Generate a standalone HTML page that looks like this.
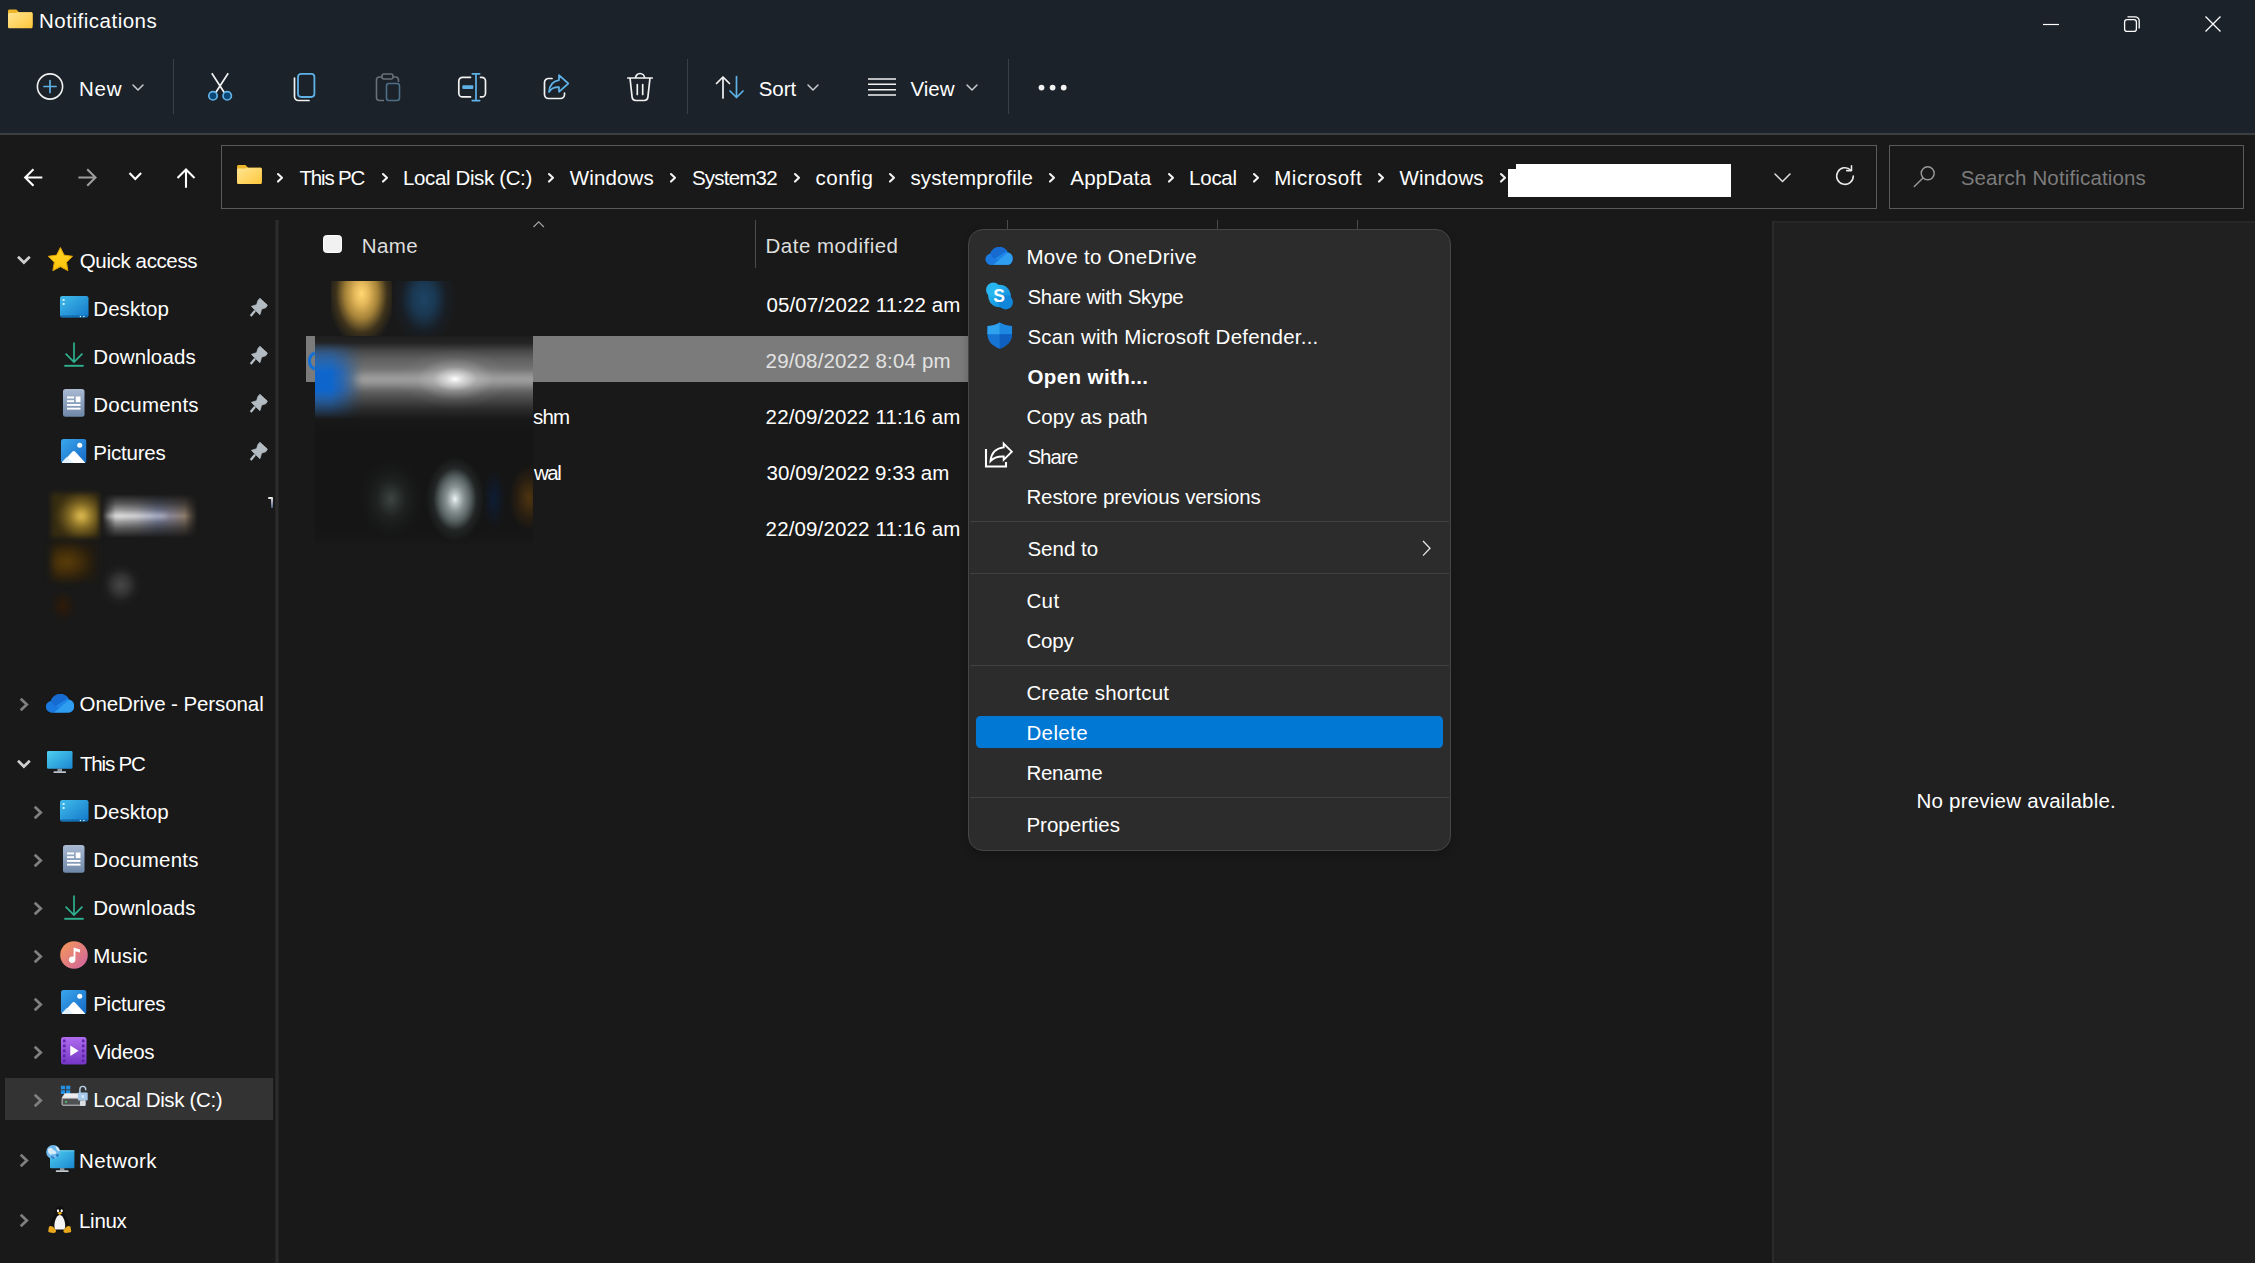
<!DOCTYPE html>
<html lang="en">
<head>
<meta charset="utf-8">
<title>Notifications</title>
<style>
*{box-sizing:border-box;margin:0;padding:0}
html,body{width:2255px;height:1263px;overflow:hidden;background:#191919}
body{position:relative;font-family:"Liberation Sans",sans-serif;font-size:20px;color:#fff}
.a{position:absolute}
.t{position:absolute;white-space:nowrap;line-height:30px;height:30px;font-size:20.5px;color:#fff}
svg{position:absolute;overflow:visible}
#top{left:0;top:0;width:2255px;height:133px;background:#1b2229}
#topline{left:0;top:133px;width:2255px;height:2px;background:#3c3f42}
#navrow{left:0;top:135px;width:2255px;height:85px;background:#191919}
#addr{left:221px;top:145px;width:1656px;height:64px;border:1px solid #5a5a5a;background:#191919}
#search{left:1889px;top:145px;width:355px;height:64px;border:1px solid #5a5a5a;background:#191919}
#side{left:0;top:220px;width:275px;height:1043px;background:#191919}
#sdiv{left:275px;top:220px;width:4px;height:1043px;background:linear-gradient(to right,#202020,#2b2b2b 30%,#2b2b2b 70%,#202020)}
#main{left:279px;top:220px;width:1493px;height:1043px;background:#191919}
#pdiv{left:1772px;top:220.500px;width:2.300px;height:1043px;background:#2b2b2b}
#prev{left:1774px;top:220.500px;width:481px;height:1043px;background:#202020;border-top:2.500px solid #272727}
.sep{position:absolute;width:1px;background:#39404a}
</style>
</head>
<body>
<!-- ===== title bar + toolbar ===== -->
<div id="top" class="a"></div>
<div id="topline" class="a"></div>
<div id="navrow" class="a"></div>
<div id="addr" class="a"></div>
<div id="search" class="a"></div>
<div id="side" class="a"></div>
<div id="sdiv" class="a"></div>
<div id="main" class="a"></div>
<div id="pdiv" class="a"></div>
<div id="prev" class="a"></div>

<svg style="left:8.4px;top:8.9px" width="24.6" height="19.7" viewBox="0 0 26 20"><defs><linearGradient id="fgt" x1="0" y1="0" x2="1" y2="1"><stop offset="0" stop-color="#ffe592"/><stop offset="1" stop-color="#ffc73c"/></linearGradient></defs>
<path d="M1.500 0h7.300l2.900 3H24.500c.8 0 1.500.7 1.500 1.500V17H0V1.500C0 .7.700 0 1.500 0z" fill="#ebb62a"/>
<path d="M0 5.200c0-.8.700-1.500 1.500-1.500h6.800l2.200-.7H24.500c.8 0 1.500.7 1.500 1.500V18.500c0 .8-.7 1.500-1.500 1.500H1.500C.7 20 0 19.300 0 18.500z" fill="url(#fgt)"/></svg>
<div class="t" style="left:39.0px;top:6.4px;letter-spacing:0.51px;">Notifications</div>
<svg style="left:2040px;top:14px" width="24" height="20" viewBox="0 0 24 20"><path d="M3 10.500h16" stroke="#fff" stroke-width="1.200" fill="none"/></svg>
<svg style="left:2120px;top:12px" width="24" height="24" viewBox="0 0 24 24"><rect x="4.600" y="7.600" width="11.800" height="11.800" rx="2.500" fill="none" stroke="#fff" stroke-width="1.300"/><path d="M7.500 4.800h7.500c2.300 0 4.200 1.900 4.200 4.200v7.500" fill="none" stroke="#fff" stroke-width="1.300"/></svg>
<svg style="left:2201px;top:12px" width="24" height="24" viewBox="0 0 24 24"><path d="M4.500 4.500l15 15M19.500 4.500l-15 15" stroke="#fff" stroke-width="1.300" fill="none"/></svg>

<svg style="left:35px;top:72px" width="30" height="30" viewBox="0 0 30 30"><circle cx="15" cy="14.500" r="12.600" fill="none" stroke="#f2f2f2" stroke-width="1.600"/><path d="M15 8.500v12M9 14.500h12" stroke="#5fb2e8" stroke-width="1.700" fill="none" stroke-linecap="round"/></svg>
<div class="t" style="left:79.0px;top:73.7px;letter-spacing:0.75px;">New</div>
<svg style="left:131.0px;top:82.8px" width="14" height="9" viewBox="0 0 14 9"><path d="M2 2l5.0 5l5.0 -5" fill="none" stroke="#c8ccd0" stroke-width="1.5" stroke-linecap="round" stroke-linejoin="round"/></svg>
<div class="sep" style="left:173px;top:59px;height:55px"></div>
<svg style="left:205px;top:71px" width="30" height="32" viewBox="0 0 30 32"><path d="M6.800 2.300l12.600 19.500M23.200 2.300l-12.600 19.500" stroke="#f2f2f2" stroke-width="1.700" fill="none" stroke-linecap="butt"/><circle cx="8" cy="24.800" r="4.200" fill="#0b4774" stroke="#5fb2e8" stroke-width="1.700"/><circle cx="22.200" cy="24.800" r="4.200" fill="#0b4774" stroke="#5fb2e8" stroke-width="1.700"/></svg>
<svg style="left:290px;top:71px" width="30" height="32" viewBox="0 0 30 32"><path d="M4.500 7v18.500c0 2.200 1.800 4 4 4H19" fill="none" stroke="#f2f2f2" stroke-width="1.700" stroke-linecap="round"/><rect x="8" y="2.800" width="16.400" height="23.200" rx="3.200" fill="none" stroke="#5fb2e8" stroke-width="1.800"/></svg>
<svg style="left:373px;top:71px" width="30" height="32" viewBox="0 0 30 32"><path d="M9 6H6.500C4.800 6 3.500 7.300 3.500 9v17.500c0 1.700 1.300 3 3 3H11M20 6h2.500c1.700 0 3 1.300 3 3v2" fill="none" stroke="#68717b" stroke-width="1.600"/><rect x="9" y="3" width="11" height="5" rx="2" fill="none" stroke="#68717b" stroke-width="1.600"/><rect x="13.500" y="12.500" width="13" height="17" rx="2.500" fill="none" stroke="#4d6f88" stroke-width="1.600"/></svg>
<svg style="left:456px;top:71px" width="32" height="32" viewBox="0 0 32 32"><path d="M14.500 6.300H6.500c-2 0-3.700 1.700-3.700 3.700v12.200c0 2 1.700 3.700 3.700 3.700h8M24.500 6.300h1.300c2 0 3.700 1.700 3.700 3.700v12.200c0 2-1.700 3.700-3.700 3.700h-1.300" fill="none" stroke="#f2f2f2" stroke-width="1.700" stroke-linecap="round"/><path d="M16.300 2.800h7.400M16.300 29.600h7.400M20 2.800v26.800" stroke="#5fb2e8" stroke-width="1.700" fill="none" stroke-linecap="round"/><rect x="6.300" y="14.300" width="11" height="3.600" rx="1" fill="#5fb2e8"/></svg>
<svg style="left:541px;top:72px" width="32" height="30" viewBox="0 0 32 30"><path d="M11 6.500H7.500c-2.200 0-4 1.800-4 4v12c0 2.200 1.800 4 4 4h12c2.200 0 4-1.800 4-4V21" fill="none" stroke="#f2f2f2" stroke-width="1.700" stroke-linecap="round"/><path d="M18 3.200l9.300 8.300-9.300 8.300v-4.600c-4.500-.2-7.800 1.300-10 4.800.4-6.200 3.800-10.800 10-11.800z" fill="none" stroke="#5fb2e8" stroke-width="1.700" stroke-linejoin="round"/></svg>
<svg style="left:624px;top:71px" width="32" height="32" viewBox="0 0 32 32"><path d="M3.800 7h24.400M11.500 7c0-2.500 2-4.500 4.500-4.500s4.500 2 4.500 4.500M6 7l2.100 19.200c.2 1.900 1.800 3.300 3.700 3.300h8.400c1.900 0 3.500-1.400 3.700-3.300L26 7M13.300 13.500v10M18.700 13.500v10" fill="none" stroke="#f2f2f2" stroke-width="1.700" stroke-linecap="round" stroke-linejoin="round"/></svg>
<div class="sep" style="left:687px;top:59px;height:55px"></div>
<svg style="left:714px;top:74px" width="32" height="26" viewBox="0 0 32 26"><path d="M9 24V3M2.500 9.500L9 3l6.500 6.500" fill="none" stroke="#f2f2f2" stroke-width="1.700" stroke-linecap="round" stroke-linejoin="round"/><path d="M22.500 2.500v21M16 17l6.500 6.500L29 17" fill="none" stroke="#5fb2e8" stroke-width="1.700" stroke-linecap="round" stroke-linejoin="round"/></svg>
<div class="t" style="left:758.7px;top:73.7px;letter-spacing:-0.03px;">Sort</div>
<svg style="left:806.2px;top:82.8px" width="14" height="9" viewBox="0 0 14 9"><path d="M2 2l5.0 5l5.0 -5" fill="none" stroke="#c8ccd0" stroke-width="1.5" stroke-linecap="round" stroke-linejoin="round"/></svg>
<svg style="left:866px;top:76px" width="32" height="22" viewBox="0 0 32 22"><path d="M2 3h28M2 8.300h28M2 13.700h28M2 19h28" stroke="#f2f2f2" stroke-width="1.500" fill="none"/></svg>
<div class="t" style="left:910.4px;top:73.7px;letter-spacing:0.01px;">View</div>
<svg style="left:965.2px;top:82.8px" width="14" height="9" viewBox="0 0 14 9"><path d="M2 2l5.0 5l5.0 -5" fill="none" stroke="#c8ccd0" stroke-width="1.5" stroke-linecap="round" stroke-linejoin="round"/></svg>
<div class="sep" style="left:1008px;top:59px;height:55px"></div>
<svg style="left:1036px;top:82px" width="34" height="12" viewBox="0 0 34 12"><circle cx="5.500" cy="5.600" r="2.900" fill="#f2f2f2"/><circle cx="16.600" cy="5.600" r="2.900" fill="#f2f2f2"/><circle cx="27.700" cy="5.600" r="2.900" fill="#f2f2f2"/></svg>

<svg style="left:20px;top:160px" width="180" height="36" viewBox="20 160 180 36"><path d="M42.300 177.500H25.500M33.500 169.200L25.200 177.500L33.500 185.800" stroke="#fff" fill="none" stroke-width="2.100" stroke-linecap="butt" stroke-linejoin="miter"/><path d="M78.400 177.500H95.200M87.200 169.200L95.500 177.500L87.200 185.800" stroke="#9d9d9d" fill="none" stroke-width="2.100" stroke-linecap="butt" stroke-linejoin="miter"/><path d="M129.500 173L135.300 179L141.100 173" stroke="#fff" fill="none" stroke-width="2.100" stroke-linecap="butt" stroke-linejoin="miter"/><path d="M186 187.700V169.800M177.500 178L186 169.500L194.500 178" stroke="#fff" fill="none" stroke-width="2.100" stroke-linecap="butt" stroke-linejoin="miter"/></svg>
<svg style="left:236.5px;top:165px" width="24.9" height="19.1" viewBox="0 0 26 20"><defs><linearGradient id="fgn" x1="0" y1="0" x2="1" y2="1"><stop offset="0" stop-color="#ffe592"/><stop offset="1" stop-color="#ffc73c"/></linearGradient></defs>
<path d="M1.500 0h7.300l2.900 3H24.500c.8 0 1.500.7 1.500 1.500V17H0V1.500C0 .7.700 0 1.500 0z" fill="#ebb62a"/>
<path d="M0 5.200c0-.8.700-1.500 1.500-1.500h6.800l2.200-.7H24.500c.8 0 1.500.7 1.500 1.500V18.500c0 .8-.7 1.500-1.500 1.500H1.500C.7 20 0 19.300 0 18.500z" fill="url(#fgn)"/></svg>
<div class="t" style="left:299.5px;top:162.6px;letter-spacing:-1.17px;">This PC</div>
<div class="t" style="left:403.0px;top:162.6px;letter-spacing:-0.37px;">Local Disk (C:)</div>
<div class="t" style="left:569.8px;top:162.6px;letter-spacing:0.13px;">Windows</div>
<div class="t" style="left:691.9px;top:162.6px;letter-spacing:-0.78px;">System32</div>
<div class="t" style="left:815.6px;top:162.6px;letter-spacing:0.50px;">config</div>
<div class="t" style="left:910.4px;top:162.6px;letter-spacing:0.15px;">systemprofile</div>
<div class="t" style="left:1070.3px;top:162.6px;letter-spacing:0.17px;">AppData</div>
<div class="t" style="left:1189.1px;top:162.6px;letter-spacing:-0.26px;">Local</div>
<div class="t" style="left:1274.2px;top:162.6px;letter-spacing:0.54px;">Microsoft</div>
<div class="t" style="left:1399.5px;top:162.6px;letter-spacing:0.16px;">Windows</div>
<svg style="left:275.8px;top:172.1px" width="8" height="11.6" viewBox="0 0 8 11.6"><path d="M2 2l4 3.8l-4 3.8" fill="none" stroke="#f4f4f4" stroke-width="2.1" stroke-linecap="round" stroke-linejoin="round"/></svg>
<svg style="left:380.5px;top:172.1px" width="8" height="11.6" viewBox="0 0 8 11.6"><path d="M2 2l4 3.8l-4 3.8" fill="none" stroke="#f4f4f4" stroke-width="2.1" stroke-linecap="round" stroke-linejoin="round"/></svg>
<svg style="left:546.5999999999999px;top:172.1px" width="8" height="11.6" viewBox="0 0 8 11.6"><path d="M2 2l4 3.8l-4 3.8" fill="none" stroke="#f4f4f4" stroke-width="2.1" stroke-linecap="round" stroke-linejoin="round"/></svg>
<svg style="left:668.5px;top:172.1px" width="8" height="11.6" viewBox="0 0 8 11.6"><path d="M2 2l4 3.8l-4 3.8" fill="none" stroke="#f4f4f4" stroke-width="2.1" stroke-linecap="round" stroke-linejoin="round"/></svg>
<svg style="left:792.5999999999999px;top:172.1px" width="8" height="11.6" viewBox="0 0 8 11.6"><path d="M2 2l4 3.8l-4 3.8" fill="none" stroke="#f4f4f4" stroke-width="2.1" stroke-linecap="round" stroke-linejoin="round"/></svg>
<svg style="left:888.0999999999999px;top:172.1px" width="8" height="11.6" viewBox="0 0 8 11.6"><path d="M2 2l4 3.8l-4 3.8" fill="none" stroke="#f4f4f4" stroke-width="2.1" stroke-linecap="round" stroke-linejoin="round"/></svg>
<svg style="left:1047.8999999999999px;top:172.1px" width="8" height="11.6" viewBox="0 0 8 11.6"><path d="M2 2l4 3.8l-4 3.8" fill="none" stroke="#f4f4f4" stroke-width="2.1" stroke-linecap="round" stroke-linejoin="round"/></svg>
<svg style="left:1166.6px;top:172.1px" width="8" height="11.6" viewBox="0 0 8 11.6"><path d="M2 2l4 3.8l-4 3.8" fill="none" stroke="#f4f4f4" stroke-width="2.1" stroke-linecap="round" stroke-linejoin="round"/></svg>
<svg style="left:1251.5px;top:172.1px" width="8" height="11.6" viewBox="0 0 8 11.6"><path d="M2 2l4 3.8l-4 3.8" fill="none" stroke="#f4f4f4" stroke-width="2.1" stroke-linecap="round" stroke-linejoin="round"/></svg>
<svg style="left:1376.8px;top:172.1px" width="8" height="11.6" viewBox="0 0 8 11.6"><path d="M2 2l4 3.8l-4 3.8" fill="none" stroke="#f4f4f4" stroke-width="2.1" stroke-linecap="round" stroke-linejoin="round"/></svg>
<svg style="left:1498.8px;top:172.1px" width="8" height="11.6" viewBox="0 0 8 11.6"><path d="M2 2l4 3.8l-4 3.8" fill="none" stroke="#f4f4f4" stroke-width="2.1" stroke-linecap="round" stroke-linejoin="round"/></svg>
<div class="a" style="left:1507.600px;top:163.600px;width:223.400px;height:33.200px;background:#fff"></div><div class="a" style="left:1507px;top:163px;width:8.500px;height:5.500px;background:#191919"></div>
<svg style="left:1772.5px;top:171.75px" width="19" height="11.5" viewBox="0 0 19 11.5"><path d="M2 2l7.5 7.5l7.5 -7.5" fill="none" stroke="#e0e0e0" stroke-width="1.5" stroke-linecap="round" stroke-linejoin="round"/></svg>
<svg style="left:1833px;top:164px" width="24" height="24" viewBox="0 0 24 24"><path d="M20.300 12a8.300 8.300 0 1 1-2.600-6" fill="none" stroke="#e8e8e8" stroke-width="1.600" stroke-linecap="round"/><path d="M18.500 1.800v4.800h-4.800" fill="none" stroke="#e8e8e8" stroke-width="1.600" stroke-linecap="round" stroke-linejoin="round"/></svg>
<svg style="left:1912px;top:164px" width="24" height="24" viewBox="0 0 24 24"><circle cx="15.700" cy="9.300" r="6.500" fill="none" stroke="#9a9a9a" stroke-width="1.400"/><path d="M11 14L2.300 22.500" stroke="#9a9a9a" stroke-width="1.400" stroke-linecap="round"/></svg>
<div class="t" style="left:1960.7px;top:163.4px;color:#7c7c7c;letter-spacing:0.15px;">Search Notifications</div>

<svg width="0" height="0" style="left:0;top:0"><defs>
<linearGradient id="gDesk" x1="0" y1="0" x2="1" y2="1"><stop offset="0" stop-color="#42bcec"/><stop offset="1" stop-color="#1278c8"/></linearGradient>
<linearGradient id="gDoc" x1="0" y1="0" x2="0" y2="1"><stop offset="0" stop-color="#a9bad2"/><stop offset="1" stop-color="#6f88a8"/></linearGradient>
<linearGradient id="gPic" x1="0" y1="0" x2="1" y2="1"><stop offset="0" stop-color="#3aa7ee"/><stop offset="1" stop-color="#1668c4"/></linearGradient>
<linearGradient id="gMus" x1="0" y1="0" x2="1" y2="1"><stop offset="0" stop-color="#f79a55"/><stop offset="1" stop-color="#cf62a3"/></linearGradient>
<linearGradient id="gVid" x1="0" y1="0" x2="0" y2="1"><stop offset="0" stop-color="#b06cf0"/><stop offset="1" stop-color="#7436c4"/></linearGradient>
<linearGradient id="gMon" x1="0" y1="0" x2="1" y2="1"><stop offset="0" stop-color="#4fd0f0"/><stop offset="1" stop-color="#1a86d0"/></linearGradient>
<linearGradient id="gCloud" x1="0" y1="0" x2="1" y2="1"><stop offset="0" stop-color="#1a73d8"/><stop offset="1" stop-color="#2aa5f0"/></linearGradient>
<linearGradient id="gStar" x1="0" y1="0" x2="0" y2="1"><stop offset="0" stop-color="#ffd626"/><stop offset="1" stop-color="#ffc20a"/></linearGradient>
</defs></svg>
<div class="a" style="left:5px;top:1078px;width:268px;height:42px;background:#333333"></div>
<svg style="left:15px;top:254.10000000000002px" width="18" height="13" viewBox="0 0 18 13"><path d="M3 2.800l5.900 5.700 5.900-5.700" fill="none" stroke="#cfcfcf" stroke-width="2.700"/></svg>
<svg style="left:47.6px;top:246.5px" width="25" height="26" viewBox="0 0 25 26"><path d="M12.40 0.50L16.16 8.12L24.57 9.34L18.49 15.28L19.92 23.66L12.40 19.70L4.88 23.66L6.31 15.28L0.23 9.34L8.64 8.12z" fill="url(#gStar)" stroke="#dca000" stroke-width="1" stroke-linejoin="round"/></svg>
<div class="t" style="left:79.8px;top:245.9px;letter-spacing:-0.38px;">Quick access</div>
<svg style="left:59.8px;top:296px" width="29" height="22" viewBox="0 0 29 22"><rect x="0" y="0" width="28.500" height="21.500" rx="2.200" fill="url(#gDesk)"/><path d="M0 19.200h28.500v.1c0 1.200-1 2.200-2.200 2.200H2.200C1 21.500 0 20.500 0 19.300z" fill="#0b5c9e" opacity=".6"/><rect x="2.600" y="3" width="2" height="2" fill="#c9f0ff"/><rect x="2.600" y="7" width="2" height="2" fill="#c9f0ff"/><rect x="19.800" y="19.900" width="1.300" height="1.200" fill="#d8f3ff"/><rect x="23.200" y="19.900" width="1.300" height="1.200" fill="#d8f3ff"/></svg>
<div class="t" style="left:93.3px;top:293.9px;letter-spacing:0.05px;">Desktop</div>
<svg style="left:245px;top:292px" width="30" height="30" viewBox="245 292 30 30"><path d="M259.900 298.300L267.400 305.100L265.800 307.700L261.600 309.100L259.900 314.700L251.400 306.400L256.600 304.700L258 300.500z" fill="#b2bac2" stroke="#b2bac2" stroke-width=".8" stroke-linejoin="round"/><path d="M255 310.700L250.700 316" stroke="#b8c0c8" stroke-width="2.300" stroke-linecap="butt"/></svg>
<svg style="left:64px;top:342px" width="20" height="25" viewBox="0 0 20 25"><path d="M10 0.500v19.500M1.600 11.600L10 20l8.400-8.400" fill="none" stroke="#2fb08f" stroke-width="1.700"/><path d="M0.300 23.800h19.400" stroke="#2fb08f" stroke-width="1.900"/></svg>
<div class="t" style="left:93.3px;top:341.9px;letter-spacing:0.12px;">Downloads</div>
<svg style="left:245px;top:340px" width="30" height="30" viewBox="245 292 30 30"><path d="M259.900 298.300L267.400 305.100L265.800 307.700L261.600 309.100L259.900 314.700L251.400 306.400L256.600 304.700L258 300.500z" fill="#b2bac2" stroke="#b2bac2" stroke-width=".8" stroke-linejoin="round"/><path d="M255 310.700L250.700 316" stroke="#b8c0c8" stroke-width="2.300" stroke-linecap="butt"/></svg>
<svg style="left:63px;top:389px" width="22" height="28" viewBox="0 0 22 28"><rect x="0" y="0" width="21.500" height="27.800" rx="2.500" fill="url(#gDoc)"/><rect x="4" y="7.500" width="7" height="1.900" fill="#fff"/><rect x="4" y="11.200" width="7" height="1.900" fill="#fff"/><rect x="12.800" y="7.500" width="4.700" height="5.600" fill="#fff"/><rect x="4" y="15" width="13.500" height="1.900" fill="#fff"/><rect x="4" y="18.700" width="13.500" height="1.900" fill="#fff"/></svg>
<div class="t" style="left:93.3px;top:389.9px;letter-spacing:0.20px;">Documents</div>
<svg style="left:245px;top:388px" width="30" height="30" viewBox="245 292 30 30"><path d="M259.900 298.300L267.400 305.100L265.800 307.700L261.600 309.100L259.900 314.700L251.400 306.400L256.600 304.700L258 300.500z" fill="#b2bac2" stroke="#b2bac2" stroke-width=".8" stroke-linejoin="round"/><path d="M255 310.700L250.700 316" stroke="#b8c0c8" stroke-width="2.300" stroke-linecap="butt"/></svg>
<svg style="left:61px;top:438.7px" width="26" height="24" viewBox="0 0 26 24"><clipPath id="pc438"><rect x="0" y="0" width="25.500" height="24" rx="2.800"/></clipPath><g clip-path="url(#pc438)"><rect width="25.500" height="24" fill="url(#gPic)"/><path d="M1 24L11.500 12.500c.7-.7 1.800-.7 2.500 0L24.500 24z" fill="#fff"/><path d="M0 24l6-6.200 6.500 6.200z" fill="#e2f2ff"/></g><circle cx="18.700" cy="6.200" r="2.500" fill="#fff"/></svg>
<div class="t" style="left:93.3px;top:437.9px;letter-spacing:-0.24px;">Pictures</div>
<svg style="left:245px;top:436px" width="30" height="30" viewBox="245 292 30 30"><path d="M259.900 298.300L267.400 305.100L265.800 307.700L261.600 309.100L259.900 314.700L251.400 306.400L256.600 304.700L258 300.500z" fill="#b2bac2" stroke="#b2bac2" stroke-width=".8" stroke-linejoin="round"/><path d="M255 310.700L250.700 316" stroke="#b8c0c8" stroke-width="2.300" stroke-linecap="butt"/></svg>
<svg style="left:17.5px;top:696.0px" width="13" height="17" viewBox="0 0 13 17"><path d="M2.700 2.700l6.100 5.800-6.100 5.800" fill="none" stroke="#808080" stroke-width="2.700" stroke-linecap="butt" stroke-linejoin="miter"/></svg>
<svg style="left:45.6px;top:693.6px" width="28" height="18.5" viewBox="0 0 28 18.5"><path d="M6.200 18.500C2.800 18.500 0 15.900 0 12.700c0-2.800 2.100-5.100 4.900-5.700C6.100 2.900 9.900 0 14.300 0c3.900 0 7.300 2.300 8.800 5.700 2.800.4 4.900 2.800 4.900 5.700v1.300c0 3.200-2.500 5.800-5.700 5.800z" fill="#1e84e6"/><path d="M4.900 7C6.100 2.900 9.900 0 14.300 0c3.200 0 6 1.500 7.800 3.900L8 13z" fill="#166ad0"/><path d="M6.200 18.500C2.800 18.500 0 15.900 0 12.700c0-2.100 1.200-4 3-5l17 10.800z" fill="#1a78de" opacity=".9"/><path d="M8 18.500L23.100 5.700c2.800.4 4.900 2.800 4.900 5.700v1.300c0 3.200-2.500 5.800-5.700 5.800z" fill="#2f9df0"/></svg>
<div class="t" style="left:79.6px;top:689.3px;letter-spacing:-0.09px;">OneDrive - Personal</div>
<svg style="left:15px;top:758.3px" width="18" height="13" viewBox="0 0 18 13"><path d="M3 2.800l5.900 5.700 5.900-5.700" fill="none" stroke="#cfcfcf" stroke-width="2.700"/></svg>
<svg style="left:47px;top:751.3px" width="26" height="23" viewBox="0 0 26 23"><rect x="0" y="0" width="25.500" height="17.800" rx="1.200" fill="url(#gMon)"/><rect x="10.500" y="17.800" width="4.500" height="2.800" fill="#8f9aa5"/><rect x="6.500" y="20.300" width="12.500" height="1.800" rx=".6" fill="#b9c2cb"/></svg>
<div class="t" style="left:80.0px;top:749.3px;letter-spacing:-1.18px;">This PC</div>
<svg style="left:31.700000000000003px;top:803.9px" width="13" height="17" viewBox="0 0 13 17"><path d="M2.700 2.700l6.100 5.800-6.100 5.800" fill="none" stroke="#808080" stroke-width="2.700" stroke-linecap="butt" stroke-linejoin="miter"/></svg>
<svg style="left:59.5px;top:800px" width="29" height="22" viewBox="0 0 29 22"><rect x="0" y="0" width="28.500" height="21.500" rx="2.200" fill="url(#gDesk)"/><path d="M0 19.200h28.500v.1c0 1.200-1 2.200-2.200 2.200H2.200C1 21.500 0 20.500 0 19.300z" fill="#0b5c9e" opacity=".6"/><rect x="2.600" y="3" width="2" height="2" fill="#c9f0ff"/><rect x="2.600" y="7" width="2" height="2" fill="#c9f0ff"/><rect x="19.800" y="19.900" width="1.300" height="1.200" fill="#d8f3ff"/><rect x="23.200" y="19.900" width="1.300" height="1.200" fill="#d8f3ff"/></svg>
<div class="t" style="left:93.2px;top:797.3px;letter-spacing:0.05px;">Desktop</div>
<svg style="left:31.700000000000003px;top:851.9px" width="13" height="17" viewBox="0 0 13 17"><path d="M2.700 2.700l6.100 5.800-6.100 5.800" fill="none" stroke="#808080" stroke-width="2.700" stroke-linecap="butt" stroke-linejoin="miter"/></svg>
<svg style="left:63px;top:845px" width="22" height="28" viewBox="0 0 22 28"><rect x="0" y="0" width="21.500" height="27.800" rx="2.500" fill="url(#gDoc)"/><rect x="4" y="7.500" width="7" height="1.900" fill="#fff"/><rect x="4" y="11.200" width="7" height="1.900" fill="#fff"/><rect x="12.800" y="7.500" width="4.700" height="5.600" fill="#fff"/><rect x="4" y="15" width="13.500" height="1.900" fill="#fff"/><rect x="4" y="18.700" width="13.500" height="1.900" fill="#fff"/></svg>
<div class="t" style="left:93.2px;top:845.3px;letter-spacing:0.20px;">Documents</div>
<svg style="left:31.700000000000003px;top:899.9px" width="13" height="17" viewBox="0 0 13 17"><path d="M2.700 2.700l6.100 5.800-6.100 5.800" fill="none" stroke="#808080" stroke-width="2.700" stroke-linecap="butt" stroke-linejoin="miter"/></svg>
<svg style="left:64px;top:894.5px" width="20" height="25" viewBox="0 0 20 25"><path d="M10 0.500v19.500M1.600 11.600L10 20l8.400-8.400" fill="none" stroke="#2fb08f" stroke-width="1.700"/><path d="M0.300 23.800h19.400" stroke="#2fb08f" stroke-width="1.900"/></svg>
<div class="t" style="left:93.2px;top:893.3px;letter-spacing:0.12px;">Downloads</div>
<svg style="left:31.700000000000003px;top:947.9px" width="13" height="17" viewBox="0 0 13 17"><path d="M2.700 2.700l6.100 5.800-6.100 5.800" fill="none" stroke="#808080" stroke-width="2.700" stroke-linecap="butt" stroke-linejoin="miter"/></svg>
<svg style="left:60px;top:941px" width="28" height="28" viewBox="0 0 28 28"><circle cx="14" cy="14" r="13.800" fill="url(#gMus)"/><path d="M13.600 6.500l6.400 1.900v3.200l-4.600-1.300v8.400a3.300 3.300 0 1 1-1.800-2.900z" fill="#fff"/></svg>
<div class="t" style="left:93.2px;top:941.3px;letter-spacing:0.18px;">Music</div>
<svg style="left:31.700000000000003px;top:995.9px" width="13" height="17" viewBox="0 0 13 17"><path d="M2.700 2.700l6.100 5.800-6.100 5.800" fill="none" stroke="#808080" stroke-width="2.700" stroke-linecap="butt" stroke-linejoin="miter"/></svg>
<svg style="left:61px;top:990.4px" width="26" height="24" viewBox="0 0 26 24"><clipPath id="pc990"><rect x="0" y="0" width="25.500" height="24" rx="2.800"/></clipPath><g clip-path="url(#pc990)"><rect width="25.500" height="24" fill="url(#gPic)"/><path d="M1 24L11.500 12.500c.7-.7 1.800-.7 2.500 0L24.500 24z" fill="#fff"/><path d="M0 24l6-6.200 6.500 6.200z" fill="#e2f2ff"/></g><circle cx="18.700" cy="6.200" r="2.500" fill="#fff"/></svg>
<div class="t" style="left:93.2px;top:989.3px;letter-spacing:-0.24px;">Pictures</div>
<svg style="left:31.700000000000003px;top:1043.9px" width="13" height="17" viewBox="0 0 13 17"><path d="M2.700 2.700l6.100 5.800-6.100 5.800" fill="none" stroke="#808080" stroke-width="2.700" stroke-linecap="butt" stroke-linejoin="miter"/></svg>
<svg style="left:61px;top:1037.3px" width="26" height="28" viewBox="0 0 26 28"><rect x="0" y="0" width="25.500" height="27.500" rx="2.500" fill="url(#gVid)"/><rect x="2" y="2.6" width="2.600" height="2.600" rx=".5" fill="#5d27a8"/><rect x="2" y="7.6" width="2.600" height="2.600" rx=".5" fill="#5d27a8"/><rect x="2" y="12.6" width="2.600" height="2.600" rx=".5" fill="#5d27a8"/><rect x="2" y="17.6" width="2.600" height="2.600" rx=".5" fill="#5d27a8"/><rect x="2" y="22.4" width="2.600" height="2.600" rx=".5" fill="#5d27a8"/><rect x="20.9" y="2.6" width="2.600" height="2.600" rx=".5" fill="#5d27a8"/><rect x="20.9" y="7.6" width="2.600" height="2.600" rx=".5" fill="#5d27a8"/><rect x="20.9" y="12.6" width="2.600" height="2.600" rx=".5" fill="#5d27a8"/><rect x="20.9" y="17.6" width="2.600" height="2.600" rx=".5" fill="#5d27a8"/><rect x="20.9" y="22.4" width="2.600" height="2.600" rx=".5" fill="#5d27a8"/><path d="M9.300 8.500v10.500l8.200-5.250z" fill="#fff"/></svg>
<div class="t" style="left:93.5px;top:1037.3px;letter-spacing:-0.25px;">Videos</div>
<svg style="left:31.700000000000003px;top:1091.9px" width="13" height="17" viewBox="0 0 13 17"><path d="M2.700 2.700l6.100 5.800-6.100 5.800" fill="none" stroke="#808080" stroke-width="2.700" stroke-linecap="butt" stroke-linejoin="miter"/></svg>
<svg style="left:60px;top:1084.0px" width="30" height="24" viewBox="60 1084 30 24"><rect x="60.9" y="1085.7" width="4.200" height="3.700" fill="#2390e2"/><rect x="60.9" y="1090.3" width="4.200" height="3.700" fill="#2390e2"/><rect x="66.1" y="1085.7" width="4.200" height="3.700" fill="#2390e2"/><rect x="66.1" y="1090.3" width="4.200" height="3.700" fill="#2390e2"/><path d="M64.800 1093.300H82L85.100 1097.900H61.600z" fill="#ececec"/><rect x="62.100" y="1098.200" width="22.500" height="7" rx=".8" fill="#4f5153" stroke="#c9cbcd" stroke-width="1"/><rect x="65.300" y="1101" width="1.700" height="1.700" fill="#4fd264"/><path d="M79.900 1093V1089.300a2.900 2.900 0 0 1 5.800 0V1090.300" fill="none" stroke="#bcd6ee" stroke-width="1.400"/><rect x="77.900" y="1092.600" width="9.800" height="7.900" rx="1" fill="#a6c9ea"/><rect x="80" y="1100.500" width="5.700" height="5.600" rx="1" fill="#d9dee3"/><rect x="81.500" y="1095" width="2.600" height="3" rx=".8" fill="#d4e6f6"/></svg>
<div class="t" style="left:93.2px;top:1085.3px;letter-spacing:-0.36px;">Local Disk (C:)</div>
<svg style="left:17.7px;top:1152.3px" width="13" height="17" viewBox="0 0 13 17"><path d="M2.700 2.700l6.100 5.800-6.100 5.800" fill="none" stroke="#808080" stroke-width="2.700" stroke-linecap="butt" stroke-linejoin="miter"/></svg>
<svg style="left:45.9px;top:1145.2px" width="29" height="28" viewBox="0 0 29 28"><rect x="4" y="5.200" width="24.400" height="18" rx="1.200" fill="url(#gMon)"/><rect x="4" y="5.200" width="24.400" height="1.200" fill="#7fd8f6" opacity=".7"/><rect x="14" y="23.200" width="4.400" height="2.200" fill="#8f9aa5"/><rect x="9.800" y="25.200" width="12.800" height="1.700" rx=".6" fill="#c2cad2"/><circle cx="7.200" cy="7" r="7" fill="#6fbaec"/><path d="M2.600 3.500c1.600-1.200 3.300-.6 4.100.8.800 1.400 2.700 1 3.400 2.600.5 1.300-.8 2.500-2.400 2.200-1.600-.3-2.300 1-3.600.3C2.100 8.300 1.300 5.200 2.600 3.500z" fill="#d6ecfa"/><path d="M9.500 1c2 .9 3.700 2.800 4.200 5.100-1.500.2-2.600-.8-3.100-2.100-.4-1-1.100-1.800-1.100-3z" fill="#e4f3fc"/><path d="M4.500 11.500c1.200-.6 2.600-.2 3.500.8.800.9.600 1.600 0 1.700-1.400.1-2.700-.9-3.500-2.500z" fill="#2a80c8"/><path d="M9.600 9.600c1.300-.2 2.300-1 3.300-1 .2 1.500-.5 3-1.700 4-.8-.8-1.300-1.800-1.600-3z" fill="#2a80c8"/></svg>
<div class="t" style="left:79.0px;top:1145.5px;letter-spacing:0.39px;">Network</div>
<svg style="left:17.7px;top:1212.3px" width="13" height="17" viewBox="0 0 13 17"><path d="M2.700 2.700l6.100 5.800-6.100 5.800" fill="none" stroke="#808080" stroke-width="2.700" stroke-linecap="butt" stroke-linejoin="miter"/></svg>
<svg style="left:48px;top:1205.5px" width="24" height="27" viewBox="0 0 24 27"><path d="M11.800 0c3 0 4.300 2.300 4.300 5.300 0 2.800 2 4.700 3.500 7.700 1.400 2.800 2 5.700 1.500 8.500l-4.500 3.800H7l-4.500-3.800C2 18.700 2.600 15.800 4 13c1.500-3 3.500-4.900 3.500-7.700C7.500 2.300 8.800 0 11.800 0z" fill="#101010"/><path d="M11.800 9c2.200 0 3.500 2.500 4.500 5.300 1 3 1.300 6.400.3 9.200H7c-1-2.800-.7-6.200.3-9.200C8.300 11.500 9.600 9 11.800 9z" fill="#f4f4f4"/><ellipse cx="10" cy="4.800" rx="1.100" ry="1.500" fill="#fff"/><ellipse cx="13.700" cy="4.800" rx="1.100" ry="1.500" fill="#fff"/><path d="M9.300 7l2.500-1.300L14.400 7l-2.600 1.900z" fill="#f0b018"/><path d="M1.200 20.500c1.500-1.200 3.600-.4 5 1.500 1.400 1.900 2.600 2.800 1.400 4.200-1 1.100-3.300.6-5.500.3C.4 26.300 0 25.400.4 24.200c.4-1.300.1-2.800.8-3.700z" fill="#e9a81c"/><path d="M22.300 20.500c-1.500-1.200-3.600-.4-5 1.500-1.400 1.900-2.600 2.800-1.400 4.200 1 1.100 3.300.6 5.500.3 1.700-.2 2.100-1.100 1.700-2.300-.4-1.300-.1-2.800-.8-3.700z" fill="#e9a81c"/></svg>
<div class="t" style="left:79.0px;top:1205.7px;letter-spacing:-0.29px;">Linux</div>

<svg style="left:531px;top:219px" width="16" height="11" viewBox="0 0 16 11"><path d="M2.500 8L7.700 2.900l5.200 5.100" fill="none" stroke="#a2a2a2" stroke-width="1.200"/></svg>
<div class="a" style="left:323px;top:234.700px;width:18.500px;height:18.500px;border-radius:3.500px;background:#f1f1f1;border:1px solid #fdfdfd"></div>
<div class="t" style="left:361.8px;top:230.9px;color:#dedede;letter-spacing:0.37px;">Name</div>
<div class="t" style="left:765.5px;top:230.9px;color:#dedede;letter-spacing:0.50px;">Date modified</div>
<div class="a" style="left:754.9px;top:220px;width:1.200px;height:48px;background:#4c4c4c"></div>
<div class="a" style="left:1006.6px;top:220px;width:1.200px;height:12px;background:#4c4c4c"></div>
<div class="a" style="left:1217px;top:220px;width:1.200px;height:12px;background:#4c4c4c"></div>
<div class="a" style="left:1357px;top:220px;width:1.200px;height:12px;background:#4c4c4c"></div>
<div class="a" style="left:305.500px;top:336px;width:662.500px;height:46px;background:#7b7b7b"></div>
<div class="t" style="left:766.6px;top:289.7px;color:#fff;letter-spacing:0.08px;">05/07/2022 11:22 am</div>
<div class="t" style="left:765.6px;top:345.7px;color:#e2e2e2;letter-spacing:0.15px;">29/08/2022 8:04 pm</div>
<div class="t" style="left:765.6px;top:401.7px;color:#fff;letter-spacing:0.14px;">22/09/2022 11:16 am</div>
<div class="t" style="left:766.6px;top:457.7px;color:#fff;letter-spacing:0.02px;">30/09/2022 9:33 am</div>
<div class="t" style="left:765.6px;top:513.7px;color:#fff;letter-spacing:0.14px;">22/09/2022 11:16 am</div>
<div class="t" style="left:533.0px;top:401.9px;letter-spacing:-0.83px;">shm</div>
<div class="t" style="left:534.0px;top:457.9px;letter-spacing:-1.45px;">wal</div>
<div class="a" style="left:331px;top:281px;width:61px;height:58px;background:radial-gradient(ellipse 34px 52px at 50% 22%,#ffd873 0,#e2b659 22%,#a58238 48%,rgba(92,72,30,.55) 75%,rgba(40,32,18,0) 100%)"></div>
<div class="a" style="left:395px;top:281px;width:60px;height:56px;background:radial-gradient(ellipse 32px 46px at 48% 32%,#1d4464 0,#1a3852 35%,rgba(24,36,50,.5) 70%,rgba(25,25,25,0) 100%)"></div>
<div class="a" style="left:314.700px;top:336px;width:218.100px;height:83px;overflow:hidden;background:linear-gradient(to bottom,#1e1e1e 0,#242424 7px,#484848 15px,#626262 24px,#727272 34px,#7c7c7c 43px,#6c6c6c 52px,#4c4c4c 62px,#2c2c2c 73px,#191919 83px)">
<div class="a" style="left:0;top:6px;width:50px;height:77px;background:linear-gradient(to right,#0e66cc 0,#0e66cc 16px,rgba(14,96,196,.75) 26px,rgba(14,90,180,.3) 38px,rgba(14,90,180,0) 48px);-webkit-mask-image:linear-gradient(to bottom,transparent 0,rgba(0,0,0,.5) 12px,#000 30px,#000 48px,rgba(0,0,0,.5) 62px,transparent 77px);mask-image:linear-gradient(to bottom,transparent 0,rgba(0,0,0,.5) 12px,#000 30px,#000 48px,rgba(0,0,0,.5) 62px,transparent 77px)"></div>
<div class="a" style="left:42px;top:38.500px;width:190px;height:9px;background:#a9a9a9;filter:blur(4px)"></div>
<div class="a" style="left:80px;top:8px;width:120px;height:70px;background:radial-gradient(ellipse 55px 30px at 50% 50%,#ffffff 0,rgba(235,235,235,.8) 14%,rgba(200,200,200,.4) 40%,rgba(160,160,160,.12) 70%,rgba(160,160,160,0) 100%)"></div>
</div>
<div class="a" style="left:314.700px;top:419px;width:218.100px;height:126px;overflow:hidden;background:linear-gradient(to bottom,#181818 0,#151515 14px,#151515 112px,#181818 126px)">
<div class="a" style="left:40px;top:38px;width:72px;height:84px;background:radial-gradient(ellipse 32px 40px at 50% 50%,#3c4442 0,#30373560 45%,rgba(30,34,33,.25) 75%,rgba(20,20,20,0) 100%)"></div>
<div class="a" style="left:108px;top:36px;width:64px;height:88px;background:radial-gradient(ellipse 29px 42px at 50% 50%,#eef4f4 0,#bcc6c6 13%,#889292 30%,#5a6464 52%,rgba(50,56,56,.5) 74%,rgba(20,20,20,0) 100%)"></div>
<div class="a" style="left:168px;top:50px;width:22px;height:60px;background:radial-gradient(ellipse 11px 30px at 50% 50%,#0e1c34 0,rgba(14,24,44,0) 100%)"></div>
<div class="a" style="left:190px;top:46px;width:40px;height:66px;background:radial-gradient(ellipse 20px 33px at 60% 50%,#4e3410 0,rgba(60,40,14,.5) 60%,rgba(20,20,20,0) 100%)"></div>
</div>
<svg style="left:307px;top:352px" width="8" height="18" viewBox="0 0 8 18"><path d="M7.700 1C4 2.500 2.500 5.500 2.500 9s1.500 6.500 5.200 8" fill="none" stroke="#1272d8" stroke-width="3"/></svg>
<div class="a" style="left:51px;top:493px;width:48px;height:45px;background:radial-gradient(ellipse 26px 25px at 63% 51%,#f2d464 0,#c8a642 16%,#8e7428 42%,#5a4818 72%,#352b10 100%);filter:blur(2.500px)"></div>
<div class="a" style="left:102px;top:494px;width:96px;height:44px;-webkit-mask-image:linear-gradient(to right,transparent 0,#000 14%,#000 86%,transparent 100%);mask-image:linear-gradient(to right,transparent 0,#000 14%,#000 86%,transparent 100%)"><div class="a" style="left:0;top:0;width:96px;height:44px;background:linear-gradient(to right,#bdbdbd 0,#d6d6d6 18%,#c4c4c8 36%,#8a92b2 58%,#8c8690 74%,#8e7c68 88%,#6a5c50 100%);-webkit-mask-image:linear-gradient(to bottom,transparent 0,rgba(0,0,0,.35) 22%,rgba(0,0,0,.8) 42%,#000 50%,rgba(0,0,0,.8) 58%,rgba(0,0,0,.35) 78%,transparent 100%);mask-image:linear-gradient(to bottom,transparent 0,rgba(0,0,0,.35) 22%,rgba(0,0,0,.8) 42%,#000 50%,rgba(0,0,0,.8) 58%,rgba(0,0,0,.35) 78%,transparent 100%)"></div></div>
<div class="a" style="left:106px;top:514px;width:60px;height:4px;background:#e6e6e6;filter:blur(2.500px);opacity:.45"></div>
<div class="a" style="left:51px;top:542px;width:46px;height:40px;background:radial-gradient(ellipse 30px 22px at 34% 50%,#5e4008 0,#46300a 40%,#2c200c 78%,#1f1a12 100%);filter:blur(3px)"></div>
<div class="a" style="left:98px;top:562px;width:46px;height:46px;background:radial-gradient(ellipse 21px 22px at 50% 50%,#464646 0,#343434 40%,rgba(40,40,40,.4) 72%,rgba(25,25,25,0) 100%)"></div>
<div class="a" style="left:50px;top:590px;width:26px;height:32px;background:radial-gradient(ellipse 13px 16px at 50% 50%,#2e1a08 0,rgba(40,24,10,.5) 60%,rgba(25,25,25,0) 100%)"></div>
<div class="a" style="left:267.500px;top:497px;width:5px;height:1.800px;background:#e8e8e8;border-radius:1px"></div>
<div class="a" style="left:271px;top:497.500px;width:1.500px;height:10px;background:linear-gradient(to bottom,#e0e0e0,#4a5a80)"></div>

<div class="t" style="left:1916.5px;top:786.4px;letter-spacing:0.22px;">No preview available.</div>

<div class="a" style="left:968.300px;top:229.300px;width:482.800px;height:621.800px;border-radius:15px;background:#2c2c2c;border:1.700px solid #464646;box-shadow:0 4px 10px rgba(0,0,0,.2)"></div>
<div class="a" style="left:970px;top:521px;width:479px;height:1px;background:#414141"></div>
<div class="a" style="left:970px;top:573px;width:479px;height:1px;background:#414141"></div>
<div class="a" style="left:970px;top:665px;width:479px;height:1px;background:#414141"></div>
<div class="a" style="left:970px;top:797px;width:479px;height:1px;background:#414141"></div>
<div class="a" style="left:976px;top:716px;width:467px;height:32px;border-radius:4.500px;background:#0078d4"></div>
<div class="t" style="left:1026.4px;top:242.3px;letter-spacing:0.34px;">Move to OneDrive</div>
<div class="t" style="left:1027.4px;top:282.3px;letter-spacing:-0.21px;">Share with Skype</div>
<div class="t" style="left:1027.4px;top:322.3px;letter-spacing:0.24px;">Scan with Microsoft Defender...</div>
<div class="t" style="left:1026.4px;top:402.3px;letter-spacing:0.05px;">Copy as path</div>
<div class="t" style="left:1027.4px;top:442.3px;letter-spacing:-0.95px;">Share</div>
<div class="t" style="left:1026.4px;top:482.3px;letter-spacing:-0.11px;">Restore previous versions</div>
<div class="t" style="left:1027.4px;top:534.3px;letter-spacing:0.02px;">Send to</div>
<div class="t" style="left:1026.4px;top:586.3px;letter-spacing:0.40px;">Cut</div>
<div class="t" style="left:1026.4px;top:626.3px;letter-spacing:-0.20px;">Copy</div>
<div class="t" style="left:1026.4px;top:678.3px;letter-spacing:0.17px;">Create shortcut</div>
<div class="t" style="left:1026.4px;top:718.3px;letter-spacing:0.39px;">Delete</div>
<div class="t" style="left:1026.4px;top:758.3px;letter-spacing:-0.26px;">Rename</div>
<div class="t" style="left:1026.4px;top:810.3px;letter-spacing:0.02px;">Properties</div>
<div class="t" style="left:1027.4px;top:362.3px;font-weight:bold;letter-spacing:0.41px;">Open with...</div>
<svg style="left:984.9px;top:246.9px" width="28.2" height="17.8" viewBox="0 0 28 18.5"><path d="M6.200 18.500C2.800 18.500 0 15.900 0 12.700c0-2.800 2.100-5.100 4.900-5.700C6.100 2.900 9.900 0 14.300 0c3.900 0 7.300 2.300 8.800 5.700 2.800.4 4.900 2.800 4.900 5.700v1.300c0 3.200-2.500 5.800-5.700 5.800z" fill="#1e84e6"/><path d="M4.900 7C6.100 2.900 9.900 0 14.300 0c3.200 0 6 1.500 7.800 3.900L8 13z" fill="#166ad0"/><path d="M6.200 18.500C2.800 18.500 0 15.900 0 12.700c0-2.100 1.200-4 3-5l17 10.800z" fill="#1a78de" opacity=".9"/><path d="M8 18.500L23.100 5.700c2.800.4 4.900 2.800 4.900 5.700v1.300c0 3.200-2.500 5.800-5.700 5.800z" fill="#2f9df0"/></svg>
<svg style="left:984.5px;top:282px" width="29" height="28" viewBox="0 0 29 28"><defs><linearGradient id="gSk" x1="0" y1="0" x2="1" y2="1"><stop offset="0" stop-color="#2fc4f4"/><stop offset="1" stop-color="#0b7fd6"/></linearGradient></defs><circle cx="14.500" cy="14" r="11.300" fill="url(#gSk)"/><circle cx="8.300" cy="7.800" r="7.300" fill="#27b6f0"/><circle cx="20.700" cy="20.200" r="7.300" fill="#0f86da"/><text x="14.200" y="20.200" text-anchor="middle" font-family="Liberation Sans, sans-serif" font-weight="bold" font-size="17.500" fill="#fff">S</text></svg>
<svg style="left:986.9px;top:321.6px" width="25.5" height="27.3" viewBox="0 0 28 30"><path d="M14 .5c3.800 2.600 8.300 3.600 13.500 3.800v9.200c0 7.700-5.300 13-13.500 16C5.800 26.500.5 21.200.5 13.500V4.300C5.700 4.100 10.200 3.100 14 .5z" fill="#1674d4"/><path d="M14 .5C10.200 3.100 5.700 4.100.5 4.300v9.300H14z" fill="#2fa2ef"/><path d="M14 .5c3.800 2.600 8.300 3.600 13.500 3.800v9.300H14z" fill="#1c88e2"/><path d="M14 13.600h13.500C27.300 21.300 22 26.600 14 29.500z" fill="#0f5fc0"/></svg>
<svg style="left:980px;top:438px" width="36" height="34" viewBox="980 438 36 34"><path d="M986 449V466.500H1006V462" fill="none" stroke="#fff" stroke-width="2.100" stroke-linejoin="miter"/><path d="M1003.700 443.600L1011.800 451.700L1003.700 459.800V456.500C997.500 456.200 993.400 457.800 990.500 461C991.200 453.600 995.600 448.300 1003.700 447.400Z" fill="none" stroke="#fff" stroke-width="1.900" stroke-linejoin="miter"/></svg>
<svg style="left:1419px;top:538px" width="16" height="20" viewBox="0 0 16 20"><path d="M4 3l7 7.300-7 7.300" fill="none" stroke="#e6e6e6" stroke-width="1.300"/></svg>

</body>
</html>
